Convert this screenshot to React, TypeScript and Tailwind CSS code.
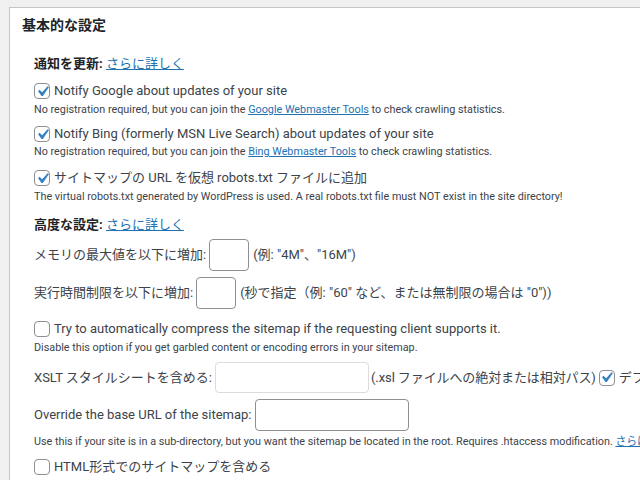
import React from 'react';

const font = { fontFamily: 'Roboto, "Noto Sans CJK JP", sans-serif' };

const Check: React.FC<{ checked?: boolean }> = ({ checked }) => (
  <span className="inline-flex w-4 h-4 shrink-0 items-center justify-center rounded-[4px] border border-[#8c8f94] bg-white">
    {checked && (
      <svg viewBox="0 0 20 20" className="w-[21px] h-[21px] shrink-0">
        <path d="M14.83 4.89l1.34.94-5.81 8.38H9.02L5.78 9.67l1.34-1.25 2.57 2.4z" fill="#3582c4" />
      </svg>
    )}
  </span>
);

const Link: React.FC<{ children: React.ReactNode }> = ({ children }) => (
  <a className="text-[#2271b1] underline">{children}</a>
);

const Desc: React.FC<{ className?: string; children: React.ReactNode }> = ({ className = '', children }) => (
  <p className={`text-[10.8px] h-[16px] leading-[16px] text-[#3c434a] whitespace-nowrap ${className}`}>{children}</p>
);

const CheckRow: React.FC<{ checked?: boolean; className?: string; children: React.ReactNode }> = ({ checked, className = '', children }) => (
  <label className={`flex h-[20px] items-center gap-[4px] text-[13px] text-[#3c434a] whitespace-nowrap ${className}`}>
    <Check checked={checked} />
    <span>{children}</span>
  </label>
);

const Heading: React.FC<{ className?: string; label: string }> = ({ className = '', label }) => (
  <div className={`h-[20px] leading-[20px] text-[13px] text-[#1d2327] whitespace-nowrap ${className}`}>
    <b>{label}</b> <Link>さらに詳しく</Link>
  </div>
);

const Box: React.FC<{ className: string }> = ({ className }) => (
  <span className={`shrink-0 rounded-[4px] border bg-white ${className}`} />
);

export default function App() {
  return (
    <div className="w-[640px] h-[480px] overflow-hidden bg-[#f0f0f1] pt-[7px] pl-[9px]" style={font}>
      <div className="w-[700px] h-[600px] bg-white border border-[#c3c4c7] pt-[7px]">
        <h2 className="h-[20px] pl-[12px] text-[14px] leading-[20px] font-bold text-[#1d2327]">基本的な設定</h2>
        <div className="pl-[24px] flex flex-col">
          <Heading className="mt-[19px]" label="通知を更新:" />
          <CheckRow checked className="mt-[7px]">Notify Google about updates of your site</CheckRow>
          <Desc className="mt-[1px]">
            No registration required, but you can join the <Link>Google Webmaster Tools</Link> to check crawling statistics.
          </Desc>
          <CheckRow checked className="mt-[6px]">Notify Bing (formerly MSN Live Search) about updates of your site</CheckRow>
          <Desc>
            No registration required, but you can join the <Link>Bing Webmaster Tools</Link> to check crawling statistics.
          </Desc>
          <CheckRow checked className="mt-[8px]">サイトマップの URL を仮想 robots.txt ファイルに追加</CheckRow>
          <Desc className="mt-[1px]">
            The virtual robots.txt generated by WordPress is used. A real robots.txt file must NOT exist in the site directory!
          </Desc>
          <Heading className="mt-[10px]" label="高度な設定:" />
          <div className="mt-[4px] h-[32px] flex items-center text-[13px] text-[#3c434a] whitespace-nowrap">
            <span>メモリの最大値を以下に増加:</span>
            <Box className="ml-[3px] w-[40px] h-[32px] border-[#8c8f94]" />
            <span className="ml-[4px]">(例: "4M"、"16M")</span>
          </div>
          <div className="mt-[6px] h-[32px] flex items-center text-[13px] text-[#3c434a] whitespace-nowrap">
            <span>実行時間制限を以下に増加:</span>
            <Box className="ml-[3px] w-[40px] h-[32px] border-[#8c8f94]" />
            <span className="ml-[4px]">(秒で指定（例: "60" など、または無制限の場合は "0"))</span>
          </div>
          <CheckRow className="mt-[10px]">Try to automatically compress the sitemap if the requesting client supports it.</CheckRow>
          <Desc className="mt-[1px]">Disable this option if you get garbled content or encoding errors in your sitemap.</Desc>
          <div className="mt-[6px] h-[31px] flex items-center text-[13px] text-[#3c434a] whitespace-nowrap">
            <span>XSLT スタイルシートを含める:</span>
            <Box className="ml-[3px] w-[154px] h-[31px] border-[#dcdcde]" />
            <span className="ml-[2px] tracking-[-0.1px]">(.xsl ファイルへの絶対または相対パス)</span>
            <span className="ml-[3px] flex items-center gap-[4px]">
              <Check checked />
              デフォルトを使用
            </span>
          </div>
          <div className="mt-[6px] h-[32px] flex items-center text-[13px] text-[#3c434a] whitespace-nowrap">
            <span>Override the base URL of the sitemap:</span>
            <Box className="ml-[3px] w-[154px] h-[32px] border-[#8c8f94]" />
          </div>
          <Desc className="mt-[3px]">
            Use this if your site is in a sub-directory, but you want the sitemap be located in the root. Requires .htaccess modification. <Link>さらに詳しく</Link>
          </Desc>
          <CheckRow className="mt-[7px]">HTML形式でのサイトマップを含める</CheckRow>
        </div>
      </div>
    </div>
  );
}
